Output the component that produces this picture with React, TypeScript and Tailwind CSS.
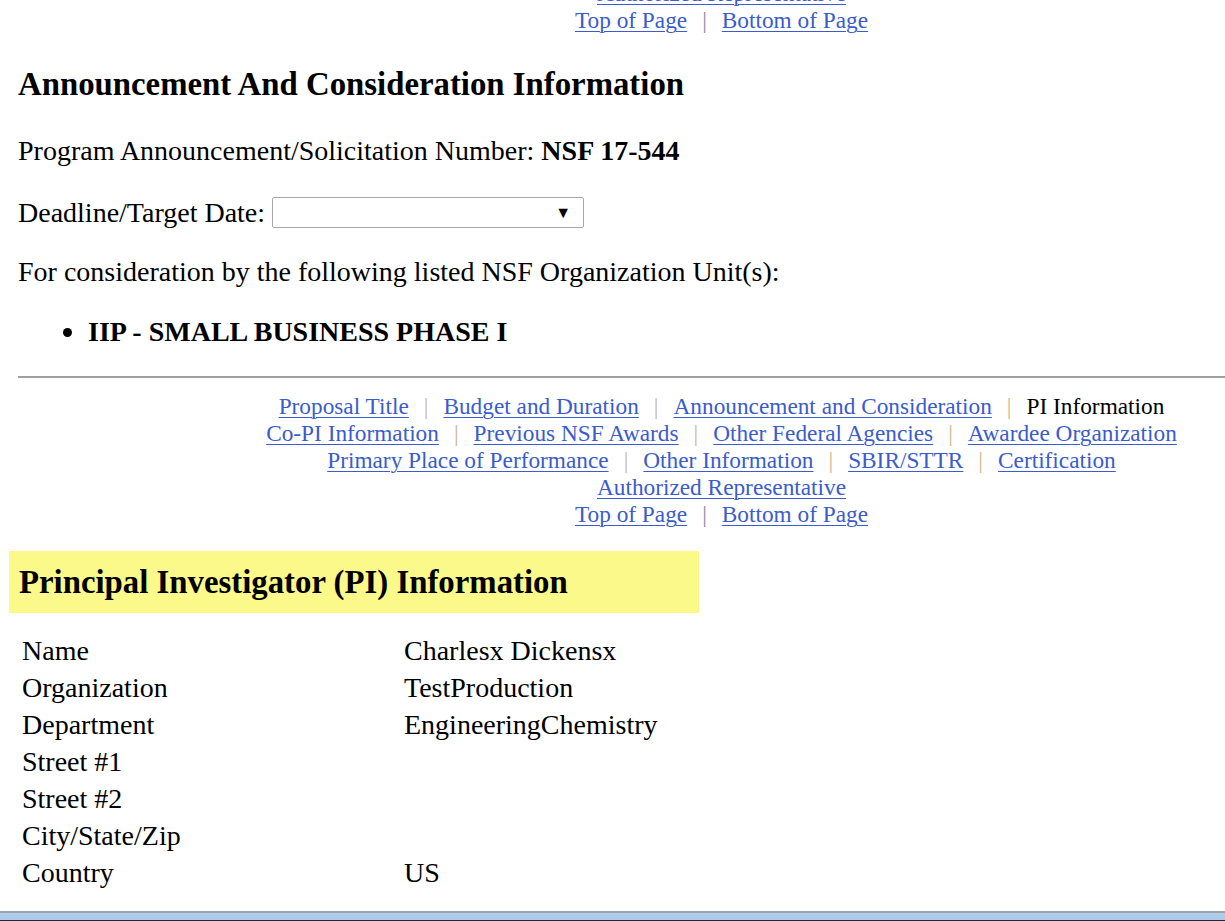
import React from 'react';

const serif = { fontFamily: '"Liberation Serif", "Times New Roman", serif' };

type NavItem = { label: string; href?: string };

const navLines: NavItem[][] = [
  [
    { label: 'Proposal Title', href: '#title' },
    { label: 'Budget and Duration', href: '#budget' },
    { label: 'Announcement and Consideration', href: '#announcement' },
    { label: 'PI Information' },
  ],
  [
    { label: 'Co-PI Information', href: '#copi' },
    { label: 'Previous NSF Awards', href: '#prev' },
    { label: 'Other Federal Agencies', href: '#other' },
    { label: 'Awardee Organization', href: '#awardee' },
  ],
  [
    { label: 'Primary Place of Performance', href: '#ppop' },
    { label: 'Other Information', href: '#otherinfo' },
    { label: 'SBIR/STTR', href: '#sbir' },
    { label: 'Certification', href: '#cert' },
  ],
  [{ label: 'Authorized Representative', href: '#aor' }],
];

const topBottom: NavItem[] = [
  { label: 'Top of Page', href: '#top' },
  { label: 'Bottom of Page', href: '#bottom' },
];

function NavLine({ items, sepClass }: { items: NavItem[]; sepClass: string }) {
  return (
    <div className="whitespace-nowrap">
      {items.map((it, i) => (
        <React.Fragment key={it.label}>
          {i > 0 && <span className={`${sepClass} px-[15px]`}>|</span>}
          {it.href ? (
            <a href={it.href} className="text-[#3a5ccc] underline decoration-1 underline-offset-[3px]">
              {it.label}
            </a>
          ) : (
            <span className="text-black">{it.label}</span>
          )}
        </React.Fragment>
      ))}
    </div>
  );
}

function NavBlock({ lines, className }: { lines: NavItem[][]; className: string }) {
  return (
    <div className={`ml-[218px] text-center text-[23.3px] leading-[27px] ${className}`}>
      {lines.map((line, i) => (
        <NavLine key={i} items={line} sepClass="text-[#c8b890]" />
      ))}
      <NavLine items={topBottom} sepClass="text-[#8c88a4]" />
    </div>
  );
}

const piRows: [string, string][] = [
  ['Name', 'Charlesx Dickensx'],
  ['Organization', 'TestProduction'],
  ['Department', 'EngineeringChemistry'],
  ['Street #1', ''],
  ['Street #2', ''],
  ['City/State/Zip', ''],
  ['Country', 'US'],
];

export default function App() {
  return (
    <div className="w-[1225px] h-[921px] overflow-hidden bg-white text-black text-[28px] leading-[32px]" style={serif}>
      {/* tail of the previous nav block, scrolled half out of view */}
      <NavBlock lines={[navLines[3]]} className="mt-[-20px]" />

      <div className="px-[18px]">
        <h3 className="mt-[31px] text-[32.8px] leading-[38px] font-bold">Announcement And Consideration Information</h3>

        <p className="mt-[32px]">
          Program Announcement/Solicitation Number: <b>NSF 17-544</b>
        </p>

        <div className="mt-[30px] flex items-center h-[31px]">
          <span>Deadline/Target Date:</span>
          <div className="ml-[7px] w-[312px] h-[31px] border border-[#a9a9a9] rounded-[2px] flex items-center justify-end pr-[12px]">
            <span className="text-[16px] leading-none">▼</span>
          </div>
        </div>

        <p className="mt-[28px]">For consideration by the following listed NSF Organization Unit(s):</p>

        <ul className="mt-[28px]">
          <li className="flex items-center font-bold">
            <span className="ml-[45px] mr-[16px] w-[9px] h-[9px] rounded-full bg-black" />
            <span>IIP - SMALL BUSINESS PHASE I</span>
          </li>
        </ul>
      </div>

      <hr className="mt-[28px] ml-[18px] border-0 border-t-[2px] border-[#a0a0a0]" />

      <NavBlock lines={navLines} className="mt-[15px]" />

      <div className="mt-[23px] ml-[9px] w-[690px] h-[62px] bg-[#fbf98a] flex items-center pl-[10px]">
        <h3 className="text-[32.8px] leading-[38px] font-bold">Principal Investigator (PI) Information</h3>
      </div>

      <table className="mt-[19px] ml-[22px] border-collapse">
        <tbody>
          {piRows.map(([k, v]) => (
            <tr key={k} className="h-[37px]">
              <td className="w-[382px] p-0">{k}</td>
              <td className="p-0">{v}</td>
            </tr>
          ))}
        </tbody>
      </table>

      <div className="mt-[20px] h-[10px] border-t-[2px] border-[#9aa4ae] bg-[#aecbea] border-b border-b-[#1c2a3a]" />
    </div>
  );
}
